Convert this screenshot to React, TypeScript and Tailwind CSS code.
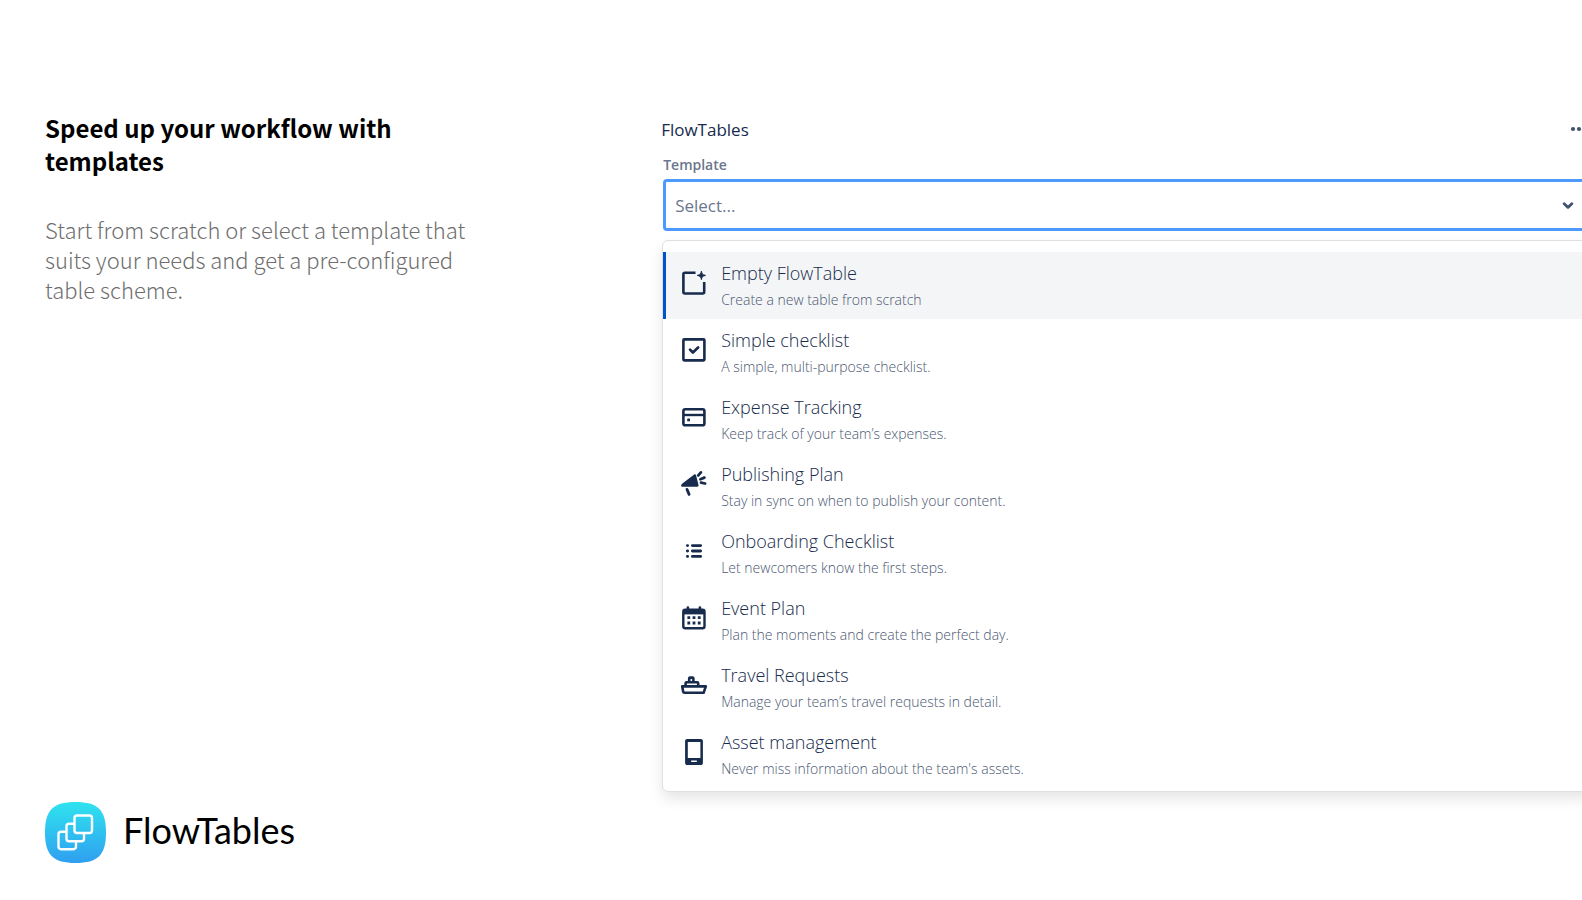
import React, { useState } from 'react'

interface Template {
  id: string
  name: string
  description: string
  icon: React.ReactNode
}

const TEMPLATES: Template[] = [
  {
    id: 'empty',
    name: 'Empty FlowTable',
    description: 'Create a new table from scratch',
    icon: (
      <>
        <path
          d="M15.5 3.7H4.8c-.8 0-1.4.6-1.4 1.4v18c0 .8.6 1.4 1.4 1.4h18c.8 0 1.4-.6 1.4-1.4V13"
          fill="none"
          stroke="currentColor"
          strokeWidth="2.6"
        />
        <path
          d="M21.4 2.2c.5 2.8 1 3.5 4.1 4.2-3.1.7-3.6 1.4-4.1 4.2-.5-2.8-1-3.5-4.1-4.2 3.1-.7 3.6-1.4 4.1-4.2z"
          fill="currentColor"
          stroke="currentColor"
          strokeWidth="1"
          strokeLinejoin="round"
        />
      </>
    ),
  },
  {
    id: 'checklist',
    name: 'Simple checklist',
    description: 'A simple, multi-purpose checklist.',
    icon: (
      <>
        <rect x="3.4" y="3.4" width="21" height="21" rx="0.8" fill="none" stroke="currentColor" strokeWidth="2.6" />
        <path
          d="M10 13.6l2.9 2.9 5.2-5"
          fill="none"
          stroke="currentColor"
          strokeWidth="2.7"
          strokeLinecap="round"
          strokeLinejoin="round"
        />
      </>
    ),
  },
  {
    id: 'expenses',
    name: 'Expense Tracking',
    description: 'Keep track of your team’s expenses.',
    icon: (
      <>
        <rect x="3.4" y="6.2" width="21" height="16" rx="1.8" fill="none" stroke="currentColor" strokeWidth="2.6" />
        <path d="M3.4 12h21" stroke="currentColor" strokeWidth="2.4" />
        <rect x="7.2" y="15.5" width="2.8" height="2.8" rx="0.4" fill="currentColor" />
      </>
    ),
  },
  {
    id: 'publishing',
    name: 'Publishing Plan',
    description: 'Stay in sync on when to publish your content.',
    icon: (
      <>
        <path
          d="M14.2 4.6c.7-.6 1.6-.3 1.9.6l2.4 9.9c.2.9-.3 1.6-1.2 1.6H2.2c-1 0-1.4-1.1-.9-2 .3-.6.8-1 1.4-1.4z"
          fill="currentColor"
        />
        <path
          d="M7 19.4l2.1 5M18.3 5.4l2.6-3M20.4 9.2l4-1.6M21 12.6l4.1.9"
          fill="none"
          stroke="currentColor"
          strokeWidth="2.8"
          strokeLinecap="round"
        />
      </>
    ),
  },
  {
    id: 'onboarding',
    name: 'Onboarding Checklist',
    description: 'Let newcomers know the first steps.',
    icon: (
      <path
        d="M7.4 8.6h.2M7.4 14h.2M7.4 19.4h.2M12.4 8.6h8.2M12.4 14h8.2M12.4 19.4h8.2"
        fill="none"
        stroke="currentColor"
        strokeWidth="2.9"
        strokeLinecap="round"
      />
    ),
  },
  {
    id: 'event',
    name: 'Event Plan',
    description: 'Plan the moments and create the perfect day.',
    icon: (
      <>
        <rect x="3.3" y="5.8" width="21.2" height="18.4" rx="2" fill="none" stroke="currentColor" strokeWidth="2.4" />
        <path d="M3.2 5.8h21.4v4.6H3.2z" fill="currentColor" />
        <path d="M7.9 3.6v3M19.9 3.6v3" stroke="currentColor" strokeWidth="2.6" strokeLinecap="round" />
        <path
          d="M7.4 12.2h2.8V15H7.4zM12.6 12.2h2.8V15h-2.8zM17.8 12.2h2.8V15h-2.8zM7.4 17.6h2.8v2.8H7.4zM12.6 17.6h2.8v2.8h-2.8zM17.8 17.6h2.8v2.8h-2.8z"
          fill="currentColor"
        />
      </>
    ),
  },
  {
    id: 'travel',
    name: 'Travel Requests',
    description: 'Manage your team’s travel requests in detail.',
    icon: (
      <g fill="none" stroke="currentColor" strokeWidth="2.6" strokeLinejoin="round">
        <path d="M2.2 15.4h23.6l-2.2 6.4H4.4c-.7 0-1.1-.4-1.2-1z" />
        <path d="M5.6 15.2v-3c0-.6.4-1 1-1h10.6c.6 0 1 .4 1 1v3" />
        <path d="M9.2 11V7.4c0-.5.3-.8.8-.8h2.6c.5 0 .8.3.8.8V11" />
      </g>
    ),
  },
  {
    id: 'assets',
    name: 'Asset management',
    description: "Never miss information about the team's assets.",
    icon: (
      <path
        fillRule="evenodd"
        d="M7.2 1h13.6c1.2 0 2.1.9 2.1 2.1v21.8c0 1.2-.9 2.1-2.1 2.1H7.2C6 27 5.1 26.1 5.1 24.9V3.1C5.1 1.9 6 1 7.2 1zM7.8 4v16h12.6V4zM11.2 22.6V24h5.6v-1.4z"
        fill="currentColor"
      />
    ),
  },
]

function Logo() {
  return (
    <svg width="61" height="61" viewBox="0 0 61 61" fill="none" aria-hidden="true">
      <defs>
        <linearGradient id="logo-bg" x1="0" y1="0" x2="0" y2="1">
          <stop offset="0" stopColor="#2fe3ee" />
          <stop offset="1" stopColor="#2f9ff0" />
        </linearGradient>
      </defs>
      <path
        d="M30.5 0C53 0 61 8 61 30.5S53 61 30.5 61 0 53 0 30.5 8 0 30.5 0z"
        fill="url(#logo-bg)"
      />
      <g stroke="#fff" strokeWidth="2.4" strokeLinejoin="round">
        <rect x="29.5" y="13.5" width="17.5" height="17.5" rx="2.5" />
        <path d="M29.5 21.8H24a2.5 2.5 0 0 0-2.5 2.5v12.5a2.5 2.5 0 0 0 2.5 2.5h12.5a2.5 2.5 0 0 0 2.5-2.5V31" />
        <path d="M21.5 29.7H16a2.5 2.5 0 0 0-2.5 2.5v12.5a2.5 2.5 0 0 0 2.5 2.5h12.5a2.5 2.5 0 0 0 2.5-2.5v-5.5" />
      </g>
    </svg>
  )
}

function TemplateOption({
  template,
  active,
  onSelect,
}: {
  template: Template
  active: boolean
  onSelect: () => void
}) {
  return (
    <li>
      <button
        type="button"
        onClick={onSelect}
        className={`flex w-full items-start border-l-3 pt-[9px] pb-[9px] pl-[14px] text-left ${
          active ? 'border-[#0052cc] bg-[#f4f5f7]' : 'border-transparent'
        }`}
      >
        <svg width="28" height="28" viewBox="0 0 28 28" className="mt-2 mr-[13px] shrink-0" aria-hidden="true">
          {template.icon}
        </svg>
        <span className="flex flex-col gap-[5px]">
          <span className="text-[18px] leading-6 font-light">{template.name}</span>
          <span className="text-[14px] leading-5 font-light text-[#4a5872]">{template.description}</span>
        </span>
      </button>
    </li>
  )
}

export default function App() {
  const [selected, setSelected] = useState('')
  const activeId = selected || TEMPLATES[0].id

  return (
    <main className="flex min-h-screen overflow-hidden bg-white">
      <section className="flex w-5/12 shrink-0 flex-col justify-between pt-[111px] pb-[37px] pl-[45px] font-['Noto_Sans_CJK_SC','Noto_Sans',sans-serif]">
        <div className="max-w-[440px]">
          <h1 className="max-w-[400px] text-[24px] leading-[33px] font-bold text-black">
            Speed up your workflow with templates
          </h1>
          <p className="mt-[37px] text-[22px] leading-[30px] font-light text-[#6e6e6e]">
            Start from scratch or select a template that suits your needs and get a pre-configured table scheme.
          </p>
        </div>
        <div className="flex items-center gap-[17px]">
          <Logo />
          <span className="pb-1.5 font-['Lato',sans-serif] text-[36px] leading-10 text-black">FlowTables</span>
        </div>
      </section>

      <section className="-mr-2 min-w-0 flex-1 pt-[118px] pl-0.5 font-['Open_Sans','Noto_Sans',sans-serif] text-[#172b4d]">
        <header className="flex items-center justify-between">
          <h2 className="text-[17px] leading-6 font-medium">FlowTables</h2>
          <button type="button" aria-label="More actions" className="pb-0.5 text-[#42526e]">
            <svg width="20" height="6" viewBox="0 0 20 6" fill="currentColor" aria-hidden="true">
              <circle cx="3" cy="3" r="2.1" />
              <circle cx="9" cy="3" r="2.1" />
              <circle cx="15" cy="3" r="2.1" />
            </svg>
          </button>
        </header>

        <label htmlFor="template" className="mt-[13px] block pl-0.5 text-[14px] leading-5 font-semibold text-[#6b778c]">
          Template
        </label>
        <div className="relative mt-1 ml-0.5">
          <select
            id="template"
            value={selected}
            onChange={(e) => setSelected(e.target.value)}
            className="block h-[52px] w-full appearance-none rounded-[4px] border-3 border-[#4c9aff] bg-white pt-0.5 pl-[9px] text-[17px] text-[#6b778c] outline-none"
          >
            <option value="">Select...</option>
            {TEMPLATES.map((t) => (
              <option key={t.id} value={t.id}>
                {t.name}
              </option>
            ))}
          </select>
          <svg
            width="12"
            height="8"
            viewBox="0 0 12 8"
            className="pointer-events-none absolute top-[23px] right-4 text-[#42526e]"
            aria-hidden="true"
          >
            <path
              d="M2.2 1.8L6 5.4l3.8-3.6"
              fill="none"
              stroke="currentColor"
              strokeWidth="2.8"
              strokeLinecap="round"
              strokeLinejoin="round"
            />
          </svg>
        </div>

        <ul className="mt-[9px] ml-px rounded-[6px] border border-[#dfe0e3] bg-white pt-[11px] pb-[3px] shadow-[0_7px_14px_rgba(0,0,0,0.1)]">
          {TEMPLATES.map((t) => (
            <TemplateOption key={t.id} template={t} active={t.id === activeId} onSelect={() => setSelected(t.id)} />
          ))}
        </ul>
      </section>
    </main>
  )
}
